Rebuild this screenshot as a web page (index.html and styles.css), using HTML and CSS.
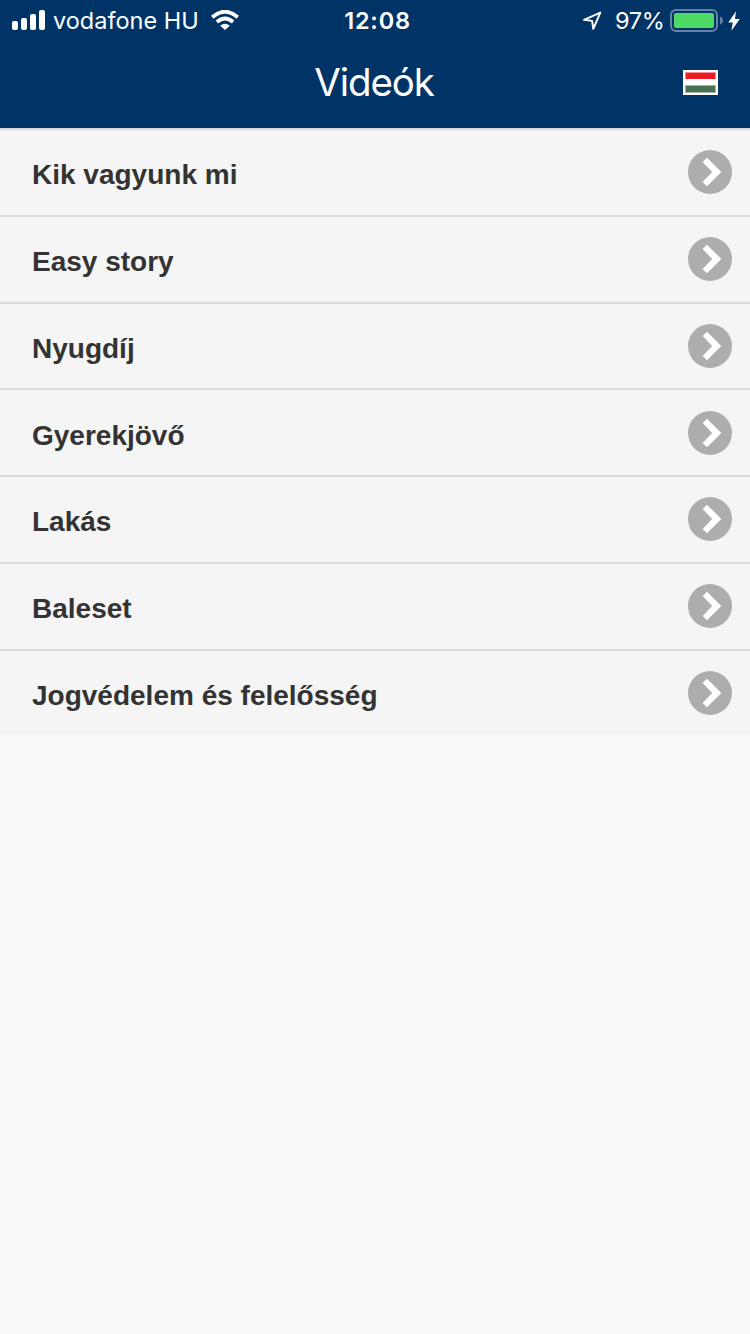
FILE: index.html
```
<!DOCTYPE html>
<html lang="hu">
<head>
<meta charset="utf-8">
<title>Videók</title>
<link rel="stylesheet" href="styles.css">
</head>
<body>
<header class="header">
  <div class="status">
    <div class="status-side">
      <svg class="signal" width="34" height="20" viewBox="0 0 34 20" fill="#fff"><rect y="11" width="6" height="9" rx="2"/><rect x="9" y="8" width="6" height="12" rx="2"/><rect x="18" y="4" width="6" height="16" rx="2"/><rect x="27" width="6" height="20" rx="2"/></svg>
      <span class="carrier">vodafone HU</span>
      <svg class="wifi" width="28" height="20" viewBox="0 0 28 20"><path d="M1.3 7.2Q14-3.6 26.7 7.2" fill="none" stroke="#fff" stroke-width="4"/><path d="M5.9 12Q14 5 22.1 12" fill="none" stroke="#fff" stroke-width="3.8"/><path d="M9.2 15.8Q14 11.6 18.8 15.8L14 20Z" fill="#fff"/></svg>
    </div>
    <time class="clock">12:08</time>
    <div class="status-side status-right">
      <svg class="location" width="20" height="19" viewBox="0 0 20 19"><path d="M2 8.8L18.3 1.6L11.3 17.8L10.1 9.9Z" fill="none" stroke="#fff" stroke-width="1.9" stroke-linejoin="round"/></svg>
      <span class="percent">97%</span>
      <svg class="battery" width="54" height="23" viewBox="0 0 54 23"><rect x="1" y="1" width="46" height="21" rx="5" fill="none" stroke="#6682a2" stroke-width="2"/><rect x="4" y="4" width="40" height="15" rx="2" fill="#4cd964"/><path d="M50 7.5Q53 8.5 53 11.5T50 15.5Z" fill="#6682a2"/></svg>
      <svg class="bolt" width="12" height="20" viewBox="0 0 12 20"><path d="M8 .3L.3 11.5H4.8L3.4 19.7L11.8 8H7Z" fill="#fff"/></svg>
    </div>
  </div>
  <div class="titlebar">
    <h1 class="title">Videók</h1>
    <svg class="flag" width="35" height="25" viewBox="0 0 35 25"><path fill="#fff" d="M0 0h35v25H0z"/><path fill="#f58c8f" d="M2 2h31v7H2z"/><path fill="#ed1c24" d="M3 3h29v6H3z"/><path fill="#a2b8a7" d="M2 15h31v8H2z"/><path fill="#467250" d="M3 16h29v6H3z"/></svg>
  </div>
</header>
<svg width="0" height="0" class="defs"><symbol id="arrow" viewBox="0 0 44 44"><circle cx="22" cy="22" r="22" fill="#adadad"/><path d="M19 7.8L33.4 22L19 36.2L14.6 32L24.2 22L14.6 12Z" fill="#fff"/></symbol></svg>
<main class="list">
  <a class="row"><span class="label">Kik vagyunk mi</span><svg class="arrow"><use href="#arrow"/></svg></a>
  <a class="row"><span class="label">Easy story</span><svg class="arrow"><use href="#arrow"/></svg></a>
  <a class="row"><span class="label">Nyugdíj</span><svg class="arrow"><use href="#arrow"/></svg></a>
  <a class="row"><span class="label">Gyerekjövő</span><svg class="arrow"><use href="#arrow"/></svg></a>
  <a class="row"><span class="label">Lakás</span><svg class="arrow"><use href="#arrow"/></svg></a>
  <a class="row"><span class="label">Baleset</span><svg class="arrow"><use href="#arrow"/></svg></a>
  <a class="row"><span class="label">Jogvédelem és felelősség</span><svg class="arrow"><use href="#arrow"/></svg></a>
</main>
</body>
</html>
```
FILE: styles.css
```
* { box-sizing: border-box; }
body { margin: 0; min-height: 1334px; background: #f9f9f9; }
svg { display: block; flex: none; }
.defs { position: absolute; }
.header { height: 128px; background: #003466; color: #fff; font-family: Inter, sans-serif; }
.status { display: grid; grid-template-columns: 1fr auto 1fr; height: 41px; padding: 0 10px 0 12px; font-size: 23.5px; line-height: 42px; white-space: nowrap; }
.status-side { display: flex; align-items: center; height: 40px; }
.status-right { justify-content: flex-end; height: 41px; }
.carrier { margin-left: 7px; padding-top: 2px; width: 146px; letter-spacing: 0; }
.wifi { margin-left: 12px; }
.clock { font-weight: 600; letter-spacing: .8px; padding-left: 3px; }
.percent { margin-left: 13px; width: 49px; letter-spacing: -.3px; }
.battery { margin-left: 6px; }
.bolt { margin-left: 4px; }
.titlebar { display: grid; grid-template-columns: 1fr auto 1fr; align-items: center; height: 83px; padding: 0 32px; }
.title { grid-column: 2; margin: 0 2px 2px 0; font-size: 38.5px; font-weight: 400; line-height: 48px; letter-spacing: -1.1px; }
.flag { justify-self: end; }
.row { display: flex; justify-content: space-between; align-items: flex-start; height: 86.75px; padding: 20.4px 18px 0 32px; border-top: 2px solid #dadadb; background: #f5f5f5; }
.label { font: bold 28px/44px "Liberation Sans", sans-serif; color: #333; padding-top: 3px; }
.arrow { width: 44px; height: 44px; }
```
